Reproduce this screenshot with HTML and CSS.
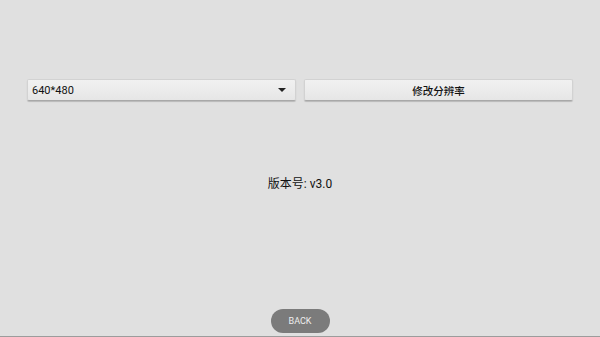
FILE: index.html
```html
<!DOCTYPE html>
<html lang="zh">
<head>
<meta charset="utf-8">
<link rel="stylesheet" href="styles.css">
</head>
<body>
<div class="page">
  <div class="row">
    <div class="spinner">
      <span class="spinner-text">640*480</span>
      <span class="arrow"></span>
    </div>
    <div class="btn">修改分辨率</div>
  </div>
  <div class="version">版本号: v3.0</div>
  <div class="spacer"></div>
  <div class="back">BACK</div>
</div>
</body>
</html>
```
FILE: styles.css
```css
html, body {
  margin: 0;
  padding: 0;
  background: #e0e0e0;
}
.page {
  width: 600px;
  height: 337px;
  box-sizing: border-box;
  border-bottom: 1px solid #9c9c9c;
  display: flex;
  flex-direction: column;
  align-items: center;
  font-family: Roboto, "Noto Sans CJK SC", sans-serif;
  color: #111;
}
.row {
  margin-top: 79px;
  width: 546px;
  display: flex;
  gap: 8px;
}
.spinner, .btn {
  flex: none;
  width: 269px;
  height: 22px;
  box-sizing: border-box;
  background: linear-gradient(#f1f1f1, #e6e6e6);
  border: 1px solid #d2d2d2;
  border-bottom: 1px solid #a8a8a8;
  border-radius: 2px;
  box-shadow: 0 1px 1px rgba(0,0,0,0.18);
  display: flex;
  align-items: center;
  font-size: 11px;
}
.spinner {
  padding: 0 8px 0 4px;
  justify-content: space-between;
}
.arrow {
  width: 0;
  height: 0;
  border-left: 4px solid transparent;
  border-right: 4px solid transparent;
  border-top: 4px solid #222;
  margin-right: 1px;
}
.btn {
  justify-content: center;
  font-size: 10.5px;
  font-weight: 500;
}
.version {
  margin-top: 75px;
  font-size: 12px;
  line-height: 16px;
}
.spacer {
  flex: 1;
}
.back {
  width: 59px;
  height: 24px;
  margin-bottom: 3px;
  border-radius: 12px;
  background: #7b7b7b;
  color: #eeeeee;
  font-size: 9px;
  display: flex;
  align-items: center;
  justify-content: center;
}
```
